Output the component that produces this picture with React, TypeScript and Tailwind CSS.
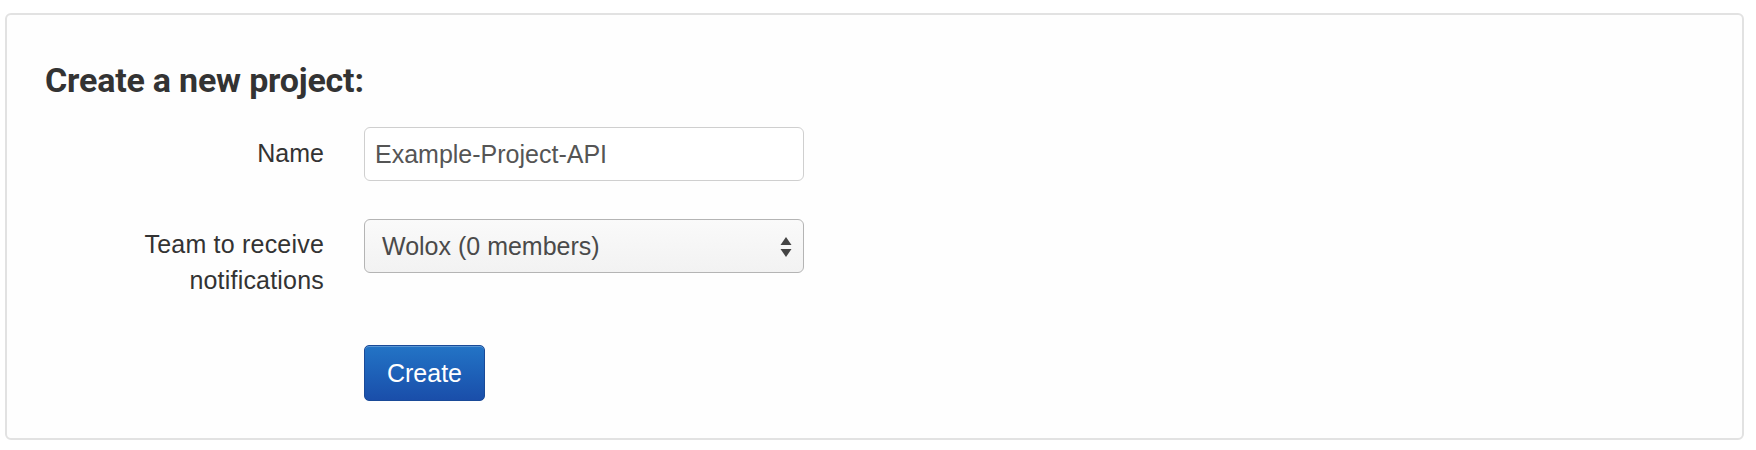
import React from "react";

export default function App() {
  return (
    <div className="w-[1756px] h-[450px] bg-white font-['Liberation_Sans',Arial,sans-serif]">
      <div className="h-[13px]" />
      <div className="ml-[5px] w-[1739px] h-[427px] border-2 border-[#e2e2e2] rounded-[6px] bg-[#fefefe] pl-[38px] pt-[45px]">
        <h2 className="font-['Roboto',sans-serif] font-bold text-[34px] leading-[40px] text-[#333] tracking-[-0.2px]">
          Create a new project:
        </h2>

        <div className="mt-[27px] flex items-start">
          <label className="w-[279px] text-right pt-[8px] text-[25px] leading-[36px] text-[#333]">
            Name
          </label>
          <input
            defaultValue="Example-Project-API"
            className="ml-[40px] w-[440px] h-[54px] border border-[#cfcfcf] rounded-[6px] bg-white pl-[10px] pr-[10px] text-[25px] text-[#555] outline-none font-['Liberation_Sans',Arial,sans-serif]"
          />
        </div>

        <div className="mt-[38px] flex items-start">
          <label className="w-[279px] text-right pt-[7px] text-[25px] leading-[36px] text-[#333] tracking-[0.2px]">
            Team to receive
            <br />
            notifications
          </label>
          <div className="ml-[40px] w-[440px] h-[54px] border border-[#b4b4b4] rounded-[6px] bg-gradient-to-b from-[#fafafa] to-[#f2f2f2] pl-[17px] pr-[11px] flex items-center justify-between text-[25px] text-[#4a4a4a]">
            <span className="leading-[30px]">Wolox (0 members)</span>
            <svg width="12" height="22" viewBox="0 0 12 22" className="mt-[1px]">
              <polygon points="6,1 11.5,9 0.5,9" fill="#444" />
              <polygon points="0.5,13 11.5,13 6,21" fill="#444" />
            </svg>
          </div>
        </div>

        <div className="mt-[47px] pl-[319px]">
          <button className="w-[121px] h-[56px] rounded-[5px] border border-[#1a4a98] bg-gradient-to-b from-[#2374c6] to-[#1a4eaa] text-white text-[25px] leading-[30px] shadow-[inset_0_1px_0_rgba(255,255,255,0.25)]">
            Create
          </button>
        </div>
      </div>
    </div>
  );
}
